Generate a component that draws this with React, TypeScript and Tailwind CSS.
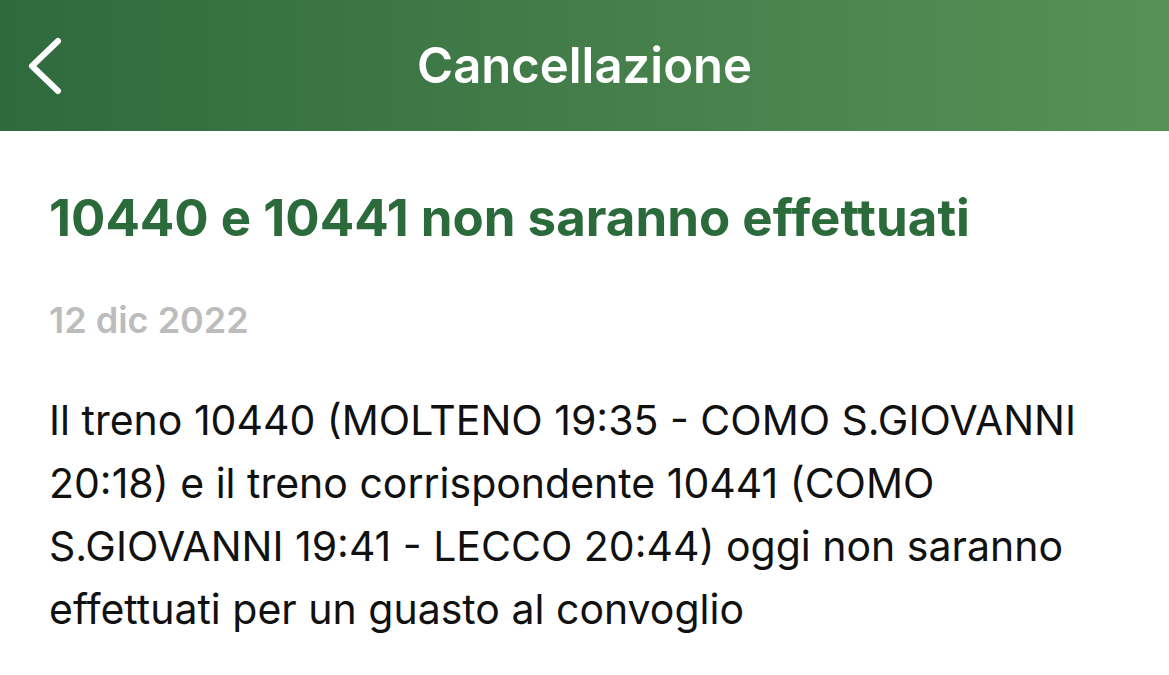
export default function App() {
  return (
    <div className="min-h-screen bg-white" style={{ fontFamily: "Inter, 'Noto Sans', sans-serif" }}>
      {/* header */}
      <header className="relative flex h-[131px] items-center justify-center bg-gradient-to-r from-[#2f6a3d] to-[#589156]">
        <button className="absolute left-[26px] top-[36px] flex h-[60px] w-[40px] items-center">
          <svg width="40" height="60" viewBox="0 0 40 60" fill="none">
            <path d="M32 5 L6 30 L32 55" stroke="white" strokeWidth="6" strokeLinecap="round" strokeLinejoin="round" />
          </svg>
        </button>
        <h1 className="text-[49px] font-semibold leading-none text-white">Cancellazione</h1>
      </header>

      {/* contenuto */}
      <main className="pl-[49px] pr-[20px] pt-[52px]">
        <h2 className="text-[51px] font-bold leading-[70px] text-[#2b6a3a]">
          10440 e 10441 non saranno effettuati
        </h2>
        <p className="mt-[47px] text-[36px] font-semibold leading-[40px] text-[#bcbcbc]">12 dic 2022</p>
        <p className="mt-[49px] text-[41px] leading-[63px] text-[#111]">
          Il treno 10440 (MOLTENO 19:35 - COMO S.GIOVANNI 20:18) e il treno corrispondente 10441 (COMO S.GIOVANNI
          19:41 - LECCO 20:44) oggi non saranno effettuati per un guasto al convoglio
        </p>
      </main>
    </div>
  );
}
